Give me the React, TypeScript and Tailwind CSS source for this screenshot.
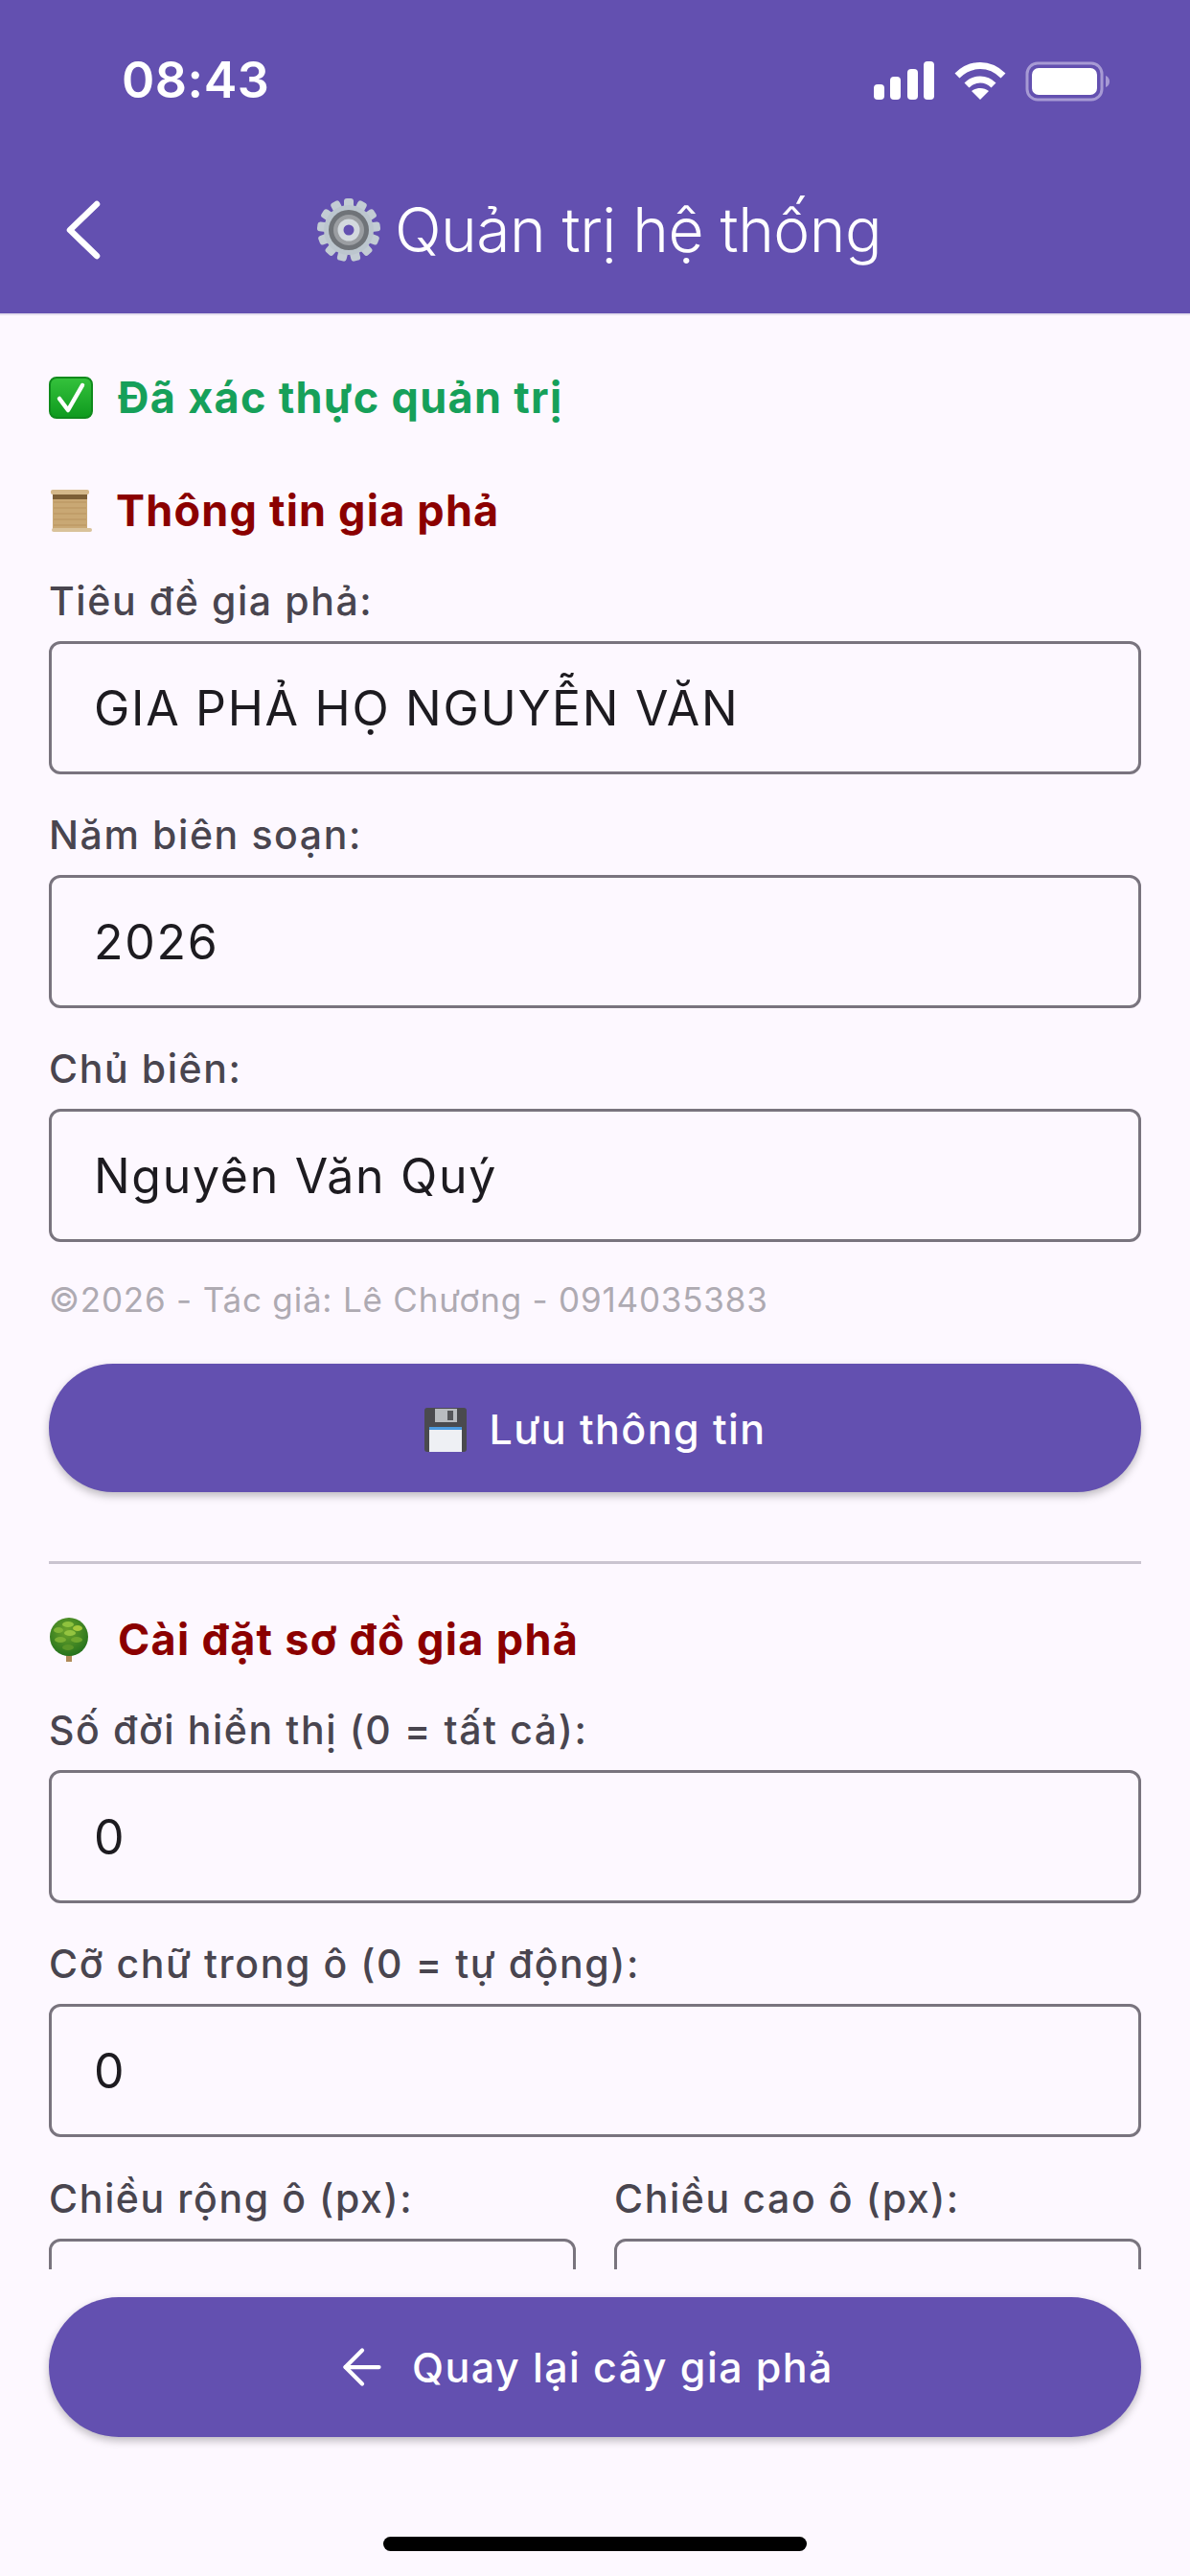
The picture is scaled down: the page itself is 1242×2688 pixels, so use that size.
import React from 'react';
import { ArrowLeft } from 'lucide-react';

const font = { fontFamily: 'Inter, "Noto Sans", sans-serif' };

function Gear() {
  const teeth = Array.from({ length: 13 }, (_, i) => (i * 360) / 13);
  return (
    <svg width="68" height="68" viewBox="0 0 68 68">
      {teeth.map((a) => (
        <rect key={a} x="29" y="1" width="10" height="14" rx="3" fill="#c3ccd4" transform={`rotate(${a} 34 34)`} />
      ))}
      <circle cx="34" cy="34" r="26" fill="#bcc6ce" />
      <circle cx="34" cy="34" r="21" fill="#6f7378" />
      <circle cx="34" cy="34" r="16" fill="#9b9ea2" />
      <circle cx="34" cy="34" r="11.5" fill="#d3d9de" />
      <circle cx="34" cy="34" r="5.5" fill="#6350b0" />
    </svg>
  );
}

function CheckBox() {
  return (
    <svg width="46" height="44" viewBox="0 0 46 44">
      <defs>
        <linearGradient id="chk" x1="0" y1="0" x2="0" y2="1">
          <stop offset="0" stopColor="#35c23c" />
          <stop offset="1" stopColor="#0e9a1e" />
        </linearGradient>
      </defs>
      <rect x="1" y="1" width="44" height="42" rx="7" fill="url(#chk)" stroke="#0f8a1c" strokeWidth="2" />
      <path d="M11 23l9 12L35 9" fill="none" stroke="#fff" strokeWidth="4.5" strokeLinecap="round" strokeLinejoin="round" />
    </svg>
  );
}

function Scroll() {
  return (
    <svg width="46" height="46" viewBox="0 0 46 46">
      <rect x="4" y="4" width="36" height="38" fill="#c9a874" />
      <path d="M5 14h34M5 20h34M5 26h34M5 32h34M5 38h34" stroke="#b8935e" strokeWidth="1" />
      <rect x="2" y="1" width="40" height="5" rx="2" fill="#d4b88a" />
      <rect x="4" y="6" width="36" height="5" fill="#7c5f36" />
      <rect x="3" y="41" width="42" height="4" rx="2" fill="#d9c29a" />
    </svg>
  );
}

function Floppy() {
  return (
    <svg width="44" height="46" viewBox="0 0 44 46">
      <rect x="0" y="0" width="44" height="46" rx="3" fill="#4a4a4e" />
      <rect x="11" y="1" width="23" height="14" fill="#b9bcc0" />
      <rect x="24" y="3" width="6" height="10" fill="#55565a" />
      <rect x="5" y="20" width="34" height="26" fill="#eef0f4" />
      <rect x="5" y="20" width="34" height="3" fill="#4d9be0" />
    </svg>
  );
}

function Tree() {
  return (
    <svg width="42" height="46" viewBox="0 0 42 46">
      <defs>
        <radialGradient id="crown" cx="0.45" cy="0.35" r="0.7">
          <stop offset="0" stopColor="#6fa52c" />
          <stop offset="1" stopColor="#1f6e1c" />
        </radialGradient>
      </defs>
      <rect x="18" y="33" width="6" height="13" fill="#b08a58" />
      <circle cx="21" cy="20" r="20" fill="url(#crown)" />
      <ellipse cx="20" cy="7" rx="6" ry="3" fill="#8fc23e" />
      <ellipse cx="30" cy="11" rx="5" ry="3" fill="#a5c93c" />
      <ellipse cx="10" cy="13" rx="5" ry="3" fill="#7eb336" />
      <ellipse cx="22" cy="16" rx="6" ry="3" fill="#94c440" />
      <ellipse cx="12" cy="23" rx="6" ry="3" fill="#7aaf34" />
      <ellipse cx="29" cy="23" rx="6" ry="3" fill="#6fa72f" />
      <ellipse cx="20" cy="31" rx="6" ry="3" fill="#5a9628" />
    </svg>
  );
}

function Label({ children }: { children: React.ReactNode }) {
  return <div className="h-[48px] mb-[18px] text-[41px] leading-[48px] font-medium tracking-[1.6px] text-[#49454f]">{children}</div>;
}

function Field({ label, value }: { label: string; value?: string }) {
  return (
    <div className="mb-[39px]">
      <Label>{label}</Label>
      <div className="h-[139px] flex items-center pl-[44px] pt-[2px] border-[3px] border-[#79747e] rounded-[12px] text-[50px] tracking-[1.7px] text-[#1d1b20]">
        {value}
      </div>
    </div>
  );
}

function PillButton({ children, height }: { children: React.ReactNode; height: string }) {
  return (
    <div className={`${height} rounded-full bg-[#6350b0] flex items-center justify-center text-white text-[43px] font-medium tracking-[1.4px] shadow-[0_4px_8px_rgba(0,0,0,0.25)]`}>
      {children}
    </div>
  );
}

export default function App() {
  return (
    <div className="w-[1242px] h-[2688px] flex flex-col bg-[#fdf8ff] overflow-hidden" style={font}>
      <header className="h-[329px] shrink-0 bg-[#6350b0] border-b-[2px] border-[#e6e0ee] text-white">
        <div className="h-[190px] flex justify-between pt-[57px] pl-[127px] pr-[84px]">
          <div className="text-[52px] leading-[54px] font-semibold tracking-[0.5px]">08:43</div>
          <div className="flex items-start gap-[20px] pt-[7px]">
            <svg width="64" height="42" viewBox="0 0 64 42" fill="#fff">
              <rect x="0" y="24" width="11" height="16" rx="4" />
              <rect x="17" y="16" width="11" height="24" rx="4" />
              <rect x="35" y="8" width="11" height="32" rx="4" />
              <rect x="52" y="0" width="11" height="40" rx="4" />
            </svg>
            <svg width="54" height="42" viewBox="0 0 54 42" fill="none" stroke="#fff" strokeWidth="7">
              <path d="M3 15C17 1 37 1 51 15" />
              <path d="M13 25c8-8 20-8 28 0" />
              <path d="M27 40l-9-9c5-4 13-4 18 0z" fill="#fff" stroke="none" />
            </svg>
            <svg width="88" height="42" viewBox="0 0 88 42" fill="none">
              <rect x="2" y="2" width="78" height="38" rx="11" stroke="#a79ad4" strokeWidth="3" />
              <rect x="7" y="7" width="68" height="28" rx="7" fill="#fff" />
              <path d="M84 15c3 1 4 4 4 6s-1 5-4 6z" fill="#a79ad4" />
            </svg>
          </div>
        </div>
        <div className="relative h-[100px] flex items-center justify-center">
          <svg className="absolute left-[65px] top-[19px]" width="44" height="62" viewBox="0 0 44 62" fill="none" stroke="#fff" strokeWidth="6.5" strokeLinecap="round" strokeLinejoin="round">
            <path d="M36 4L8 31l28 27" />
          </svg>
          <div className="flex items-center gap-[14px] pl-[8px]">
            <Gear />
            <span className="text-[64px] leading-[80px] font-light tracking-[-0.5px]">Quản trị hệ thống</span>
          </div>
        </div>
      </header>

      <main className="flex-1 min-h-0 overflow-hidden px-[51px] pt-[62px]">
        <div className="h-[48px] flex items-center gap-[26px] text-[45px] font-bold tracking-[1.3px] text-[#16a05a]">
          <CheckBox />
          Đã xác thực quản trị
        </div>
        <div className="h-[48px] mt-[70px] mb-[46px] flex items-center gap-[24px] text-[45px] font-bold tracking-[1.2px] text-[#8b0000]">
          <Scroll />
          Thông tin gia phả
        </div>
        <Field label="Tiêu đề gia phả:" value="GIA PHẢ HỌ NGUYỄN VĂN" />
        <Field label="Năm biên soạn:" value="2026" />
        <div>
          <Label>Chủ biên:</Label>
          <div className="h-[139px] flex items-center pl-[44px] pt-[2px] border-[3px] border-[#79747e] rounded-[12px] text-[50px] tracking-[1.7px] text-[#1d1b20]">
            Nguyên Văn Quý
          </div>
        </div>
        <div className="mt-[38px] mb-[45px] h-[44px] text-[35px] leading-[44px] tracking-[0.8px] text-[#aeaab2]">©2026 - Tác giả: Lê Chương - 0914035383</div>
        <PillButton height="h-[134px]">
          <span className="flex items-center gap-[24px] pt-[3px]">
            <Floppy />
            Lưu thông tin
          </span>
        </PillButton>
        <div className="mt-[72px] h-[3px] bg-[#cac4d0]" />
        <div className="h-[48px] mt-[55px] mb-[46px] flex items-center gap-[30px] text-[45px] font-bold tracking-[1.3px] text-[#8b0000]">
          <Tree />
          Cài đặt sơ đồ gia phả
        </div>
        <Field label="Số đời hiển thị (0 = tất cả):" value="0" />
        <Field label="Cỡ chữ trong ô (0 = tự động):" value="0" />
        <div className="grid grid-cols-2 gap-[40px] pt-[1px]">
          <Field label="Chiều rộng ô (px):" />
          <Field label="Chiều cao ô (px):" />
        </div>
      </main>

      <footer className="h-[320px] shrink-0 px-[51px] pt-[29px]">
        <PillButton height="h-[146px]">
          <span className="flex items-center gap-[22px] pr-[24px]">
            <ArrowLeft size={60} strokeWidth={1.7} />
            Quay lại cây gia phả
          </span>
        </PillButton>
        <div className="mt-[104px] mx-auto w-[442px] h-[15px] rounded-full bg-black" />
      </footer>
    </div>
  );
}
